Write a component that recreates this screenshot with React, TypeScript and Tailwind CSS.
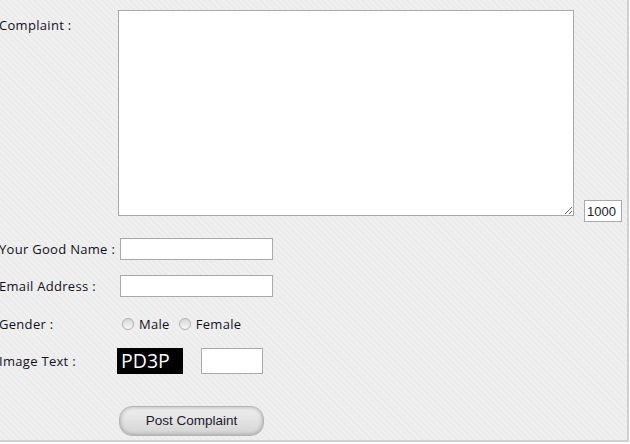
import React from "react";

const label = "font-['Open_Sans',sans-serif] text-[13px] leading-[18px] tracking-[0.3px] text-[#10101c]";

function Radio({ text }: { text: string }) {
  return (
    <span className="flex items-center gap-[5px]">
      <span className="h-[12px] w-[12px] rounded-full border border-[#b0b0b0] bg-gradient-to-b from-[#d8d8d8] to-[#f8f8f8]" />
      <span className={label}>{text}</span>
    </span>
  );
}

export default function App() {
  return (
    <div className="h-[444px] w-[630px] bg-white">
      <div className="h-[442px] w-[629px] border-r-2 border-b-2 border-[#d0d0d0] bg-[#ebebeb] bg-[image:repeating-linear-gradient(45deg,rgba(255,255,255,0.25)_0px,rgba(255,255,255,0.25)_2px,transparent_2px,transparent_4px)] leading-none">
        <div className="flex pt-[10px]">
          <div className={`w-[118px] pt-[6px] -indent-[1px] ${label}`}>Complaint :</div>
          <textarea className="h-[206px] w-[456px] resize-y border border-[#a9a9a9] bg-white outline-none" />
          <div className="ml-[10px] flex items-end">
            <input
              readOnly
              value="1000"
              className="mb-[-6px] h-[22px] w-[38px] border border-[#a9a9a9] bg-white px-[2px] font-['Liberation_Sans',sans-serif] text-[13px] text-[#1a1a2e] outline-none"
            />
          </div>
        </div>

        <div className="mt-[22px] flex items-center">
          <div className={`w-[120px] -indent-[1px] ${label}`}>Your Good Name :</div>
          <input className="h-[22px] w-[153px] border border-[#a9a9a9] bg-white outline-none" />
        </div>

        <div className="mt-[15px] flex items-center">
          <div className={`w-[120px] -indent-[1px] ${label}`}>Email Address :</div>
          <input className="h-[22px] w-[153px] border border-[#a9a9a9] bg-white outline-none" />
        </div>

        <div className="mt-[16px] flex h-[22px] items-center">
          <div className={`w-[122px] -indent-[1px] ${label}`}>Gender :</div>
          <div className="flex items-center gap-[9px]">
            <Radio text="Male" />
            <Radio text="Female" />
          </div>
        </div>

        <div className="mt-[13px] flex items-center">
          <div className={`w-[117px] -indent-[1px] ${label}`}>Image Text :</div>
          <div className="flex h-[26px] w-[66px] items-center bg-black pl-[4px] font-['Open_Sans',sans-serif] text-[19.5px] leading-none text-white">
            PD3P
          </div>
          <input className="ml-[18px] h-[26px] w-[62px] border border-[#a9a9a9] bg-white outline-none" />
        </div>

        <div className="mt-[32px] pl-[119px]">
          <button className="h-[30px] w-[145px] rounded-[13px] border border-[#b5b5b5] bg-gradient-to-b from-[#f0f0f0] to-[#d4d4d4] font-['Liberation_Sans',sans-serif] text-[13.5px] text-[#1a1a2e] shadow-[inset_0_0_4px_rgba(0,0,0,0.3)]">
            Post Complaint
          </button>
        </div>
      </div>
    </div>
  );
}
